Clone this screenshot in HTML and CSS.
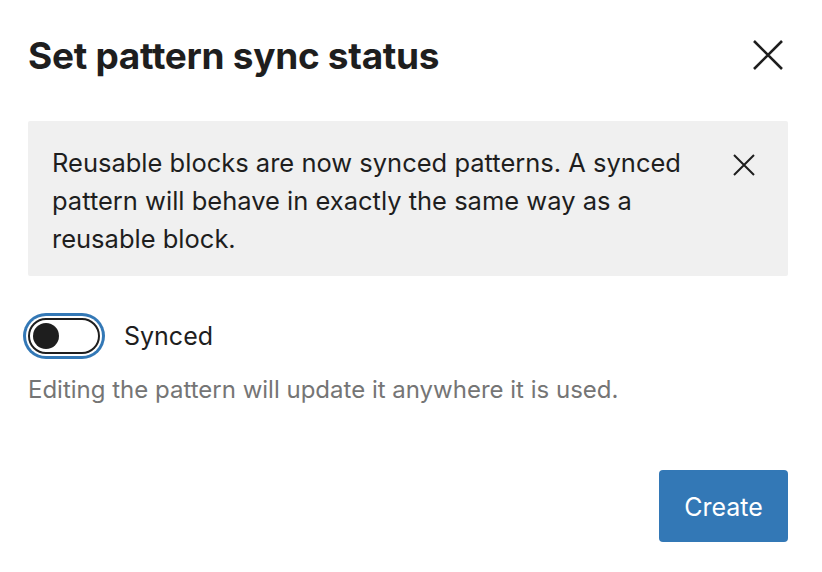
FILE: index.html
```html
<!DOCTYPE html>
<html lang="en">
<head>
    <meta charset="UTF-8">
    <meta name="viewport" content="width=device-width, initial-scale=1.0">
    <title>Set pattern sync status</title>
    <link rel="stylesheet" href="styles.css">
</head>
<body>

    <div class="modal">
        <div class="modal-header">
            <h1>Set pattern sync status</h1>
            <button class="close-btn" aria-label="Close">
                <svg width="32" height="32" viewBox="0 0 32 32"><path d="M2 2 L30 30 M30 2 L2 30" stroke="#1e1e1e" stroke-width="2.6" fill="none"/></svg>
            </button>
        </div>

        <div class="notice">
            <p class="notice-text">Reusable blocks are now synced patterns. A synced pattern will behave in exactly the same way as a reusable block.</p>
            <button class="notice-close" aria-label="Dismiss">
                <svg width="22" height="22" viewBox="0 0 22 22"><path d="M1 1 L21 21 M21 1 L1 21" stroke="#1e1e1e" stroke-width="2" fill="none"/></svg>
            </button>
        </div>

        <div class="toggle-row">
            <span class="toggle"><span class="thumb"></span></span>
            <label>Synced</label>
        </div>
        <p class="help">Editing the pattern will update it anywhere it is used.</p>

        <div class="footer">
            <button class="primary">Create</button>
        </div>
    </div>

</body>
</html>
```

FILE: styles.css
```css
body {
    margin: 0;
    font-family: 'Inter', 'Noto Sans', sans-serif;
    background-color: #fff;
    color: #1e1e1e;
}

.modal {
    padding: 0 34px 0 28px;
}

.modal-header {
    display: flex;
    justify-content: space-between;
    align-items: center;
    height: 110px;
}

h1 {
    margin: 0;
    font-size: 37px;
    font-weight: 700;
    letter-spacing: -0.3px;
}

.close-btn,
.notice-close {
    border: none;
    background: none;
    padding: 0;
    cursor: pointer;
    display: flex;
}

.close-btn {
    margin-right: 4px;
}

.notice {
    display: flex;
    justify-content: space-between;
    align-items: flex-start;
    margin-top: 11px;
    background-color: #f0f0f0;
    padding: 23px 33px 18px 24px;
    border-radius: 2px;
}

.notice-text {
    margin: 0;
    width: 650px;
    font-size: 25.5px;
    line-height: 38px;
}

.notice-close {
    margin-top: 10px;
}

.toggle-row {
    display: flex;
    align-items: center;
    gap: 24px;
    margin-top: 42px;
}

.toggle {
    box-sizing: border-box;
    width: 72px;
    height: 36px;
    border: 2px solid #1e1e1e;
    border-radius: 18px;
    background: #fff;
    box-shadow: 0 0 0 2px #fff, 0 0 0 5px #3378b6;
    display: flex;
    align-items: center;
    padding-left: 3px;
}

.thumb {
    width: 26px;
    height: 26px;
    border-radius: 50%;
    background: #1e1e1e;
}

.toggle-row label {
    font-size: 25px;
}

.help {
    margin: 21px 0 0;
    font-size: 24px;
    color: #757575;
}

.footer {
    display: flex;
    justify-content: flex-end;
    margin-top: 66px;
}

.primary {
    width: 129px;
    height: 72px;
    border: none;
    border-radius: 4px;
    background-color: #3378b6;
    color: #fff;
    font-family: inherit;
    font-size: 25px;
    padding: 2px 0 0;
    cursor: pointer;
}
```
